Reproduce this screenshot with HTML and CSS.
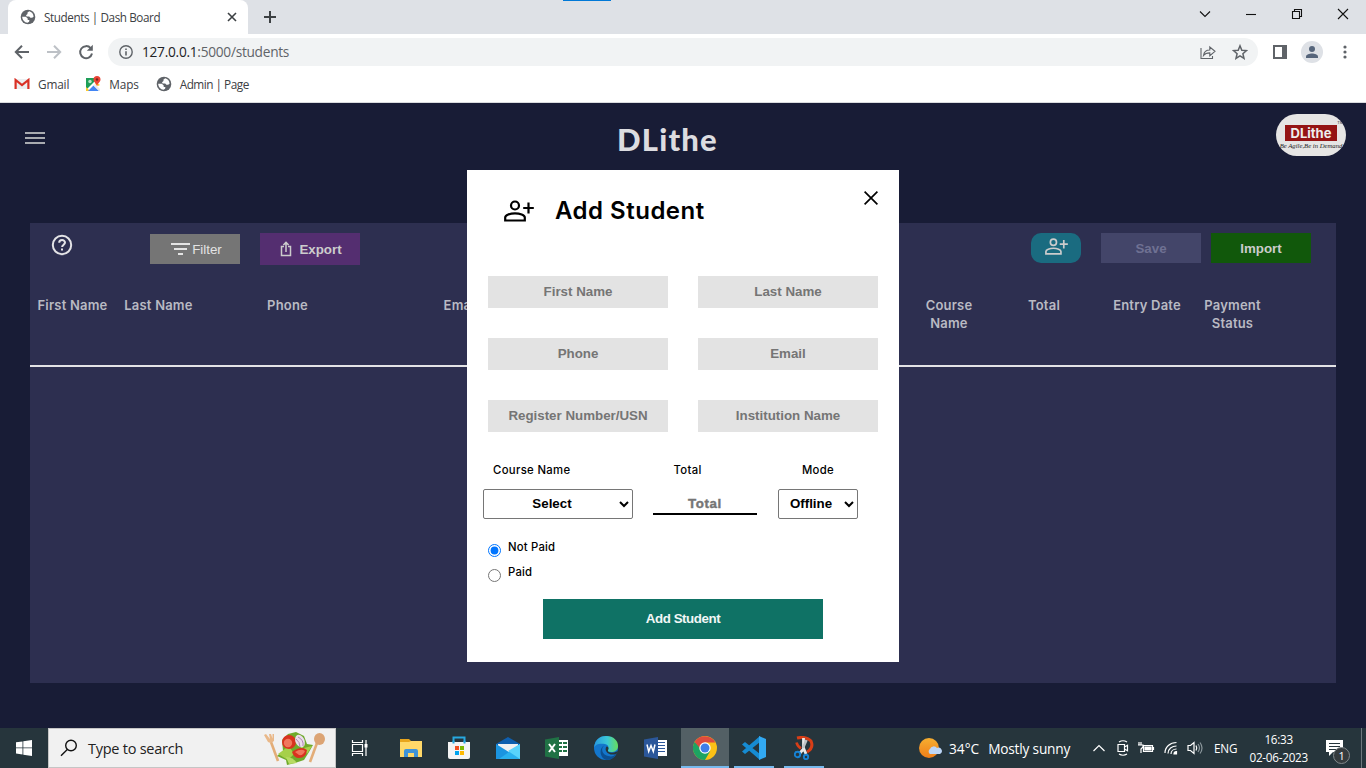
FILE: index.html
```html
<!DOCTYPE html>
<html lang="en">
<head>
<meta charset="utf-8">
<title>Students | Dash Board</title>
<link rel="stylesheet" href="styles.css">
</head>
<body>
<svg class="defs" width="0" height="0">
  <symbol id="globe" viewBox="0 0 16 16"><circle cx="8" cy="8" r="7.300" fill="#5f6368"/><path d="M9.300 2.200 7.500 3.600v1.500L6 6.200l.6 1.300h2.600l1.200 1.200h1.700l1.500-.9C13.500 4.800 11.600 2.700 9.300 2.200z" fill="#fff"/><path d="M2.200 7.800h3.600l1.900 1.800v1.500h1.700l-.3 1.700-1.600.9C4.500 13.600 2.300 11 2.200 7.800z" fill="#fff"/></symbol>
  <symbol id="addperson" viewBox="0 0 30 22"><g fill="none" stroke="currentColor" stroke-width="2.200"><circle cx="11" cy="5.500" r="4"/><path d="M1.200 20.500v-3c0-2.400 5-4.200 9.800-4.200s9.800 1.800 9.800 4.200v3zM24.500 2.500v11M19.200 8h10.600"/></g></symbol>
</svg>

<header class="browser">
  <div class="tabstrip">
    <span class="loadbar"></span>
    <div class="tab"><svg width="16" height="16"><use href="#globe"/></svg><span class="tab-title">Students | Dash Board</span><svg width="10" height="10" viewBox="0 0 10 10" stroke="#3c4043" stroke-width="1.600"><path d="M1 1l8 8M9 1L1 9"/></svg></div>
    <svg class="newtab" width="12" height="12" viewBox="0 0 12 12" stroke="#3c4043" stroke-width="2"><path d="M6 0v12M0 6h12"/></svg>
    <div class="wincontrols">
      <svg width="12" height="12" viewBox="0 0 12 12"><path d="M1 3.500l5 5 5-5"/></svg>
      <svg width="12" height="12" viewBox="0 0 12 12"><path d="M1 6.500h10"/></svg>
      <svg width="12" height="12" viewBox="0 0 12 12"><path d="M1.500 3.500h7v7h-7zM3.500 3.500v-2h7v7h-2"/></svg>
      <svg width="12" height="12" viewBox="0 0 12 12"><path d="M1 1l10 10M11 1L1 11"/></svg>
    </div>
  </div>
  <div class="toolbar">
    <div class="nav">
      <svg width="16" height="16" viewBox="0 0 16 16" stroke="#5f6368"><path d="M15 8H2M8 1.800L1.800 8 8 14.200"/></svg>
      <svg width="16" height="16" viewBox="0 0 16 16" stroke="#bdc1c6"><path d="M1 8h13M8 1.800L14.200 8 8 14.200"/></svg>
      <svg width="16" height="16" viewBox="0 0 16 16" stroke="#5f6368"><path d="M14 9.500A6 6 0 1 1 12.700 4.200"/><path d="M14.800.8v6H8.800z" fill="#5f6368" stroke="none"/></svg>
    </div>
    <div class="omnibox">
      <svg width="14" height="14" viewBox="0 0 14 14" fill="none" stroke="#5f6368" stroke-width="1.400"><circle cx="7" cy="7" r="6.200"/><path d="M7 6.200v4.300M7 3.400v1.500" stroke-width="1.600"/></svg>
      <span class="url"><b>127.0.0.1</b>:5000/students</span>
      <svg width="16" height="16" viewBox="0 0 16 16" fill="none" stroke="#5f6368" stroke-width="1.100"><path d="M1 4v10.500h11.500V12M3.500 11.500C4 8 6 6 9.800 6V3L15 7.300l-5.200 4.400V8.900C7 8.900 5 9.600 3.500 11.500z"/></svg>
      <svg width="16" height="16" viewBox="0 0 16 16" fill="none" stroke="#5f6368" stroke-width="1.500"><path d="M8 1.800l1.800 4.400 4.700.4-3.600 3.100 1.100 4.600L8 11.800l-4 2.500 1.100-4.600L1.500 6.600l4.700-.4z"/></svg>
    </div>
    <svg class="panel-icon" width="14" height="14" viewBox="0 0 14 14"><path fill="none" stroke="#5f6368" stroke-width="2" d="M1 1h12v12H1z"/><path fill="#5f6368" d="M9 1h4v12H9z"/></svg>
    <svg class="avatar" width="22" height="22" viewBox="0 0 22 22"><circle cx="11" cy="11" r="11" fill="#dee1e6"/><circle cx="11" cy="8" r="3" fill="#56657b"/><path d="M5 17v-1.500c0-2 3.500-3 6-3s6 1 6 3V17z" fill="#56657b"/></svg>
    <svg width="4" height="14" viewBox="0 0 4 14" fill="#5f6368"><circle cx="2" cy="2" r="1.600"/><circle cx="2" cy="7" r="1.600"/><circle cx="2" cy="12" r="1.600"/></svg>
  </div>
  <nav class="bookmarks">
    <span class="bm"><svg width="16" height="12" viewBox="0 0 16 12"><path fill="#eceff1" d="M1 1h14v10H1z"/><path fill="none" stroke="#d93025" stroke-width="2.200" d="M1.600 11V2l6.400 5 6.400-5v9"/></svg><span class="t-gmail">Gmail</span></span>
    <span class="bm maps"><svg width="15" height="16" viewBox="0 0 15 16"><path fill="#1e9e58" d="M0 2h12L0 14z"/><path fill="#ffca28" d="M0 11l4 4H0zM10 6l4 3-2 1-3-2z"/><path fill="#4285f4" d="M2 15l5.500-5.500L13 15z"/><path fill="#e8eaed" d="M9 8l5 5v2h-1L7.500 9.500z"/><circle cx="4" cy="5.500" r="1.700" fill="#b9e3c8"/><path fill="#ea4335" d="M11 0a3.500 3.500 0 0 1 3.500 3.500C14.500 6 11.500 7 11 10.500 10.500 7 7.500 6 7.500 3.500A3.500 3.500 0 0 1 11 0z"/><circle cx="11" cy="3.500" r="1.200" fill="#7b241c"/></svg><span class="t-maps">Maps</span></span>
    <span class="bm admin"><svg width="16" height="16"><use href="#globe"/></svg><span class="t-admin">Admin | Page</span></span>
  </nav>
</header>

<main class="page">
  <div class="pagehead">
    <div class="burger"><i></i><i></i><i></i></div>
    <h1>DLithe</h1>
    <div class="logo"><span class="logo-name">DLithe</span><span class="logo-tag">Be Agile,Be in Demand</span><small>TM</small></div>
  </div>
  <section class="board">
    <div class="actions">
      <svg class="help" width="22" height="22" viewBox="0 0 22 22" fill="none" stroke="#e3e3e6" stroke-width="2"><circle cx="11" cy="11" r="9.200"/><path d="M8.200 8.800c0-3.700 5.800-3.500 5.800-.2 0 2-2.900 2.200-2.900 4.500"/><path d="M11 14.500v2.100"/></svg>
      <button class="filter"><svg width="19" height="12" viewBox="0 0 19 12" fill="#e3e3e3"><path d="M0 0h19v2H0zM3 5h13v2H3zM7 10h5v2H7z"/></svg>Filter</button>
      <button class="export"><svg width="12" height="16" viewBox="0 0 12 16" fill="none" stroke="#ccc" stroke-width="1.500"><path d="M4 5.500H1.500v9h9v-9H8M6 11V1.500M3.400 4L6 1.400 8.600 4"/></svg>Export</button>
      <button class="adder"><svg width="23" height="17"><use href="#addperson"/></svg></button>
      <button class="save">Save</button>
      <button class="import">Import</button>
    </div>
    <div class="columns">
      <span>First Name</span><span>Last Name</span><span>Phone</span><span>Email</span><span></span><span></span><span>Course<br>Name</span><span>Total</span><span>Entry Date</span><span>Payment<br>Status</span>
    </div>
  </section>

  <form class="modal">
    <svg class="close" width="14" height="14" viewBox="0 0 14 14" stroke="#000" stroke-width="1.700"><path d="M.6.600l12.800 12.800M13.400.600L.6 13.400"/></svg>
    <div class="modal-head"><svg width="30" height="22"><use href="#addperson"/></svg><h2>Add Student</h2></div>
    <div class="fields">
      <input placeholder="First Name"><input placeholder="Last Name">
      <input placeholder="Phone"><input placeholder="Email">
      <input placeholder="Register Number/USN"><input placeholder="Institution Name">
    </div>
    <div class="course">
      <label class="l1">Course Name</label><label class="l2">Total</label><label class="l3">Mode</label>
      <select class="s1"><option>Select</option></select>
      <input class="total" placeholder="Total">
      <select class="s2"><option>Offline</option></select>
    </div>
    <div class="radios">
      <label><input type="radio" name="pay" checked><span>Not Paid</span></label>
      <label><input type="radio" name="pay"><span>Paid</span></label>
    </div>
    <button type="button" class="submit">Add Student</button>
  </form>
</main>

<footer class="taskbar">
  <div class="start"><svg width="16" height="16" viewBox="0 0 16 16" fill="#fff"><path d="M0 2.300l6.500-.9v6.100H0zM7.300 1.300L16 0v7.500H7.300zM0 8.300h6.500v6.200L0 13.600zM7.300 8.300H16V16l-8.700-1.300z"/></svg></div>
  <div class="search">
    <svg width="18" height="18" viewBox="0 0 18 18" fill="none" stroke="#111" stroke-width="1.400"><circle cx="11" cy="6.500" r="5.300"/><path d="M7.300 10.500L1 16.700"/></svg>
    <span class="t-search">Type to search</span>
    <svg width="62" height="34" viewBox="0 0 62 34">
      <path d="M7 11l7 19" stroke="#e3ad78" stroke-width="2.600"/><path d="M0 4l4 7q3 2 6-1V3L8.500 3v4.500L7 3 5 3l1 5-4-5z" fill="#e9b889"/>
      <path d="M53 12l-7 19" stroke="#e3ad78" stroke-width="2.600"/><ellipse cx="55.500" cy="8" rx="5.500" ry="6" fill="#dca474"/>
      <path d="M18 9l6-6 8-2 8 4 3 8 6 1-4 7-5 8-9 3-8 2-1-5-9-4 6-5z" fill="#6faa2b"/><path d="M14 23l11-8 5 8-6 6zM35 5l6 9-4 5zM40 17l8-2-5 8z" fill="#a6d04a"/>
      <circle cx="25" cy="11" r="7" fill="#d9321f"/><circle cx="24" cy="12" r="4.200" fill="#f0775c"/><ellipse cx="36" cy="10" rx="4.500" ry="6.500" fill="#e9dcea" transform="rotate(-25 36 10)"/><path d="M34 6q6 3 5 9M32 8q4 3 4 8" fill="none" stroke="#b285b5"/>
      <path d="M28 21q9-7 15-2-1 8-8 8-5 0-7-6z" fill="#d9321f"/><path d="M31 21q6-4 10-1-2 5-6 4z" fill="#f0775c"/><path d="M22 26q7 0 11 6l-8 1z" fill="#b7db62"/>
    </svg>
  </div>
  <div class="apps">
    <div><svg width="18" height="18" viewBox="0 0 18 18" fill="none" stroke="#fff" stroke-width="1.200"><path d="M1.500 1v2.500h10V1M1.500 5.500h10v7h-10zM1.500 17v-2.500h10V17M15 1v16"/><path d="M13.500 5h3v3.500h-3z" fill="#fff" stroke="none"/></svg></div>
    <div class="folder"><svg width="22" height="20" viewBox="0 0 22 20"><path d="M0 1h9l2 2h11v16H0z" fill="#e8a51d"/><path d="M0 4h9l2-1h11v16H0z" fill="#ffd869"/><path d="M4 19v-6q0-2 2-2h10q2 0 2 2v6h-4v-4H8v4z" fill="#3f93d8"/></svg></div>
    <div><svg width="24" height="24" viewBox="0 0 24 24"><path d="M6.500 7V1.500h11V7" fill="none" stroke="#27a8df" stroke-width="2"/><path d="M1 6h22v15q0 2-2 2H3q-2 0-2-2z" fill="#f4f4f4"/><path d="M6.500 5v2.500M17.500 5v2.500" stroke="#27a8df" stroke-width="2"/><path d="M8 10h4v4H8z" fill="#f25022"/><path d="M13 10h4v4h-4z" fill="#7fba00"/><path d="M8 15h4v4H8z" fill="#00a4ef"/><path d="M13 15h4v4h-4z" fill="#ffb900"/></svg></div>
    <div><svg width="24" height="22" viewBox="0 0 24 22"><path d="M0 7l12-7 12 7v3H0z" fill="#0f5fae"/><path d="M2 7h20v7l-10 3L2 14z" fill="#f1f1f1"/><path d="M0 7l24 15H0z" fill="#1b94e0"/><path d="M24 7v15H3z" fill="#2ab0ee"/><path d="M24 7v15l-12-8z" fill="#59d3fb"/></svg></div>
    <div><svg width="24" height="22" viewBox="0 0 24 22"><path d="M12 3h11v16H12z" fill="#fff"/><path d="M14 5h3v2h-3zM14 9h3v2h-3zM14 13h3v2h-3zM18 5h4v2h-4zM18 9h4v2h-4zM18 13h4v2h-4z" fill="#207245"/><path d="M0 2.500L14 0v22L0 19.500z" fill="#207245"/><path d="M4 7l6 8M10 7l-6 8" stroke="#fff" stroke-width="2"/></svg></div>
    <div><svg width="24" height="24" viewBox="0 0 24 24"><defs><linearGradient id="edge"><stop stop-color="#2898df"/><stop offset=".55" stop-color="#3bc7d6"/><stop offset="1" stop-color="#67df5b"/></linearGradient></defs><circle cx="12" cy="12" r="12" fill="#1376cc"/><path d="M0 12C1 3 6 0 12 0c8 0 12 5 12 10 0 4-3 6-7 6-3 0-4-1-3-2 1-2 1-5-3-6C6 7 1 8 0 12z" fill="url(#edge)"/><path d="M11 9c-5 3-3 10 3 11 4 1 6 0 8-2-1 3-5 6-9 6-7-1-9-12-2-15z" fill="#0c4f91"/><path d="M12.500 10.500c2 0 2.500 2 1.500 3.500-.8 2 2 3 6 2.500l4-1.500-1.500 3c-8 2.500-13-3.500-10-7.500z" fill="#27343a"/></svg></div>
    <div><svg width="23" height="22" viewBox="0 0 23 22"><path d="M12 3h11v16H12z" fill="#fff"/><path d="M14 5.500h7M14 8.500h7M14 11.500h7M14 14.500h7" stroke="#2b579a" stroke-width="1.200"/><path d="M0 2.500L14 0v22L0 19.500z" fill="#2b579a"/><path d="M3 7.500l1.700 7L7 8.500l2.300 6 1.700-7" fill="none" stroke="#fff" stroke-width="1.500"/></svg></div>
    <div class="on current"><svg width="24" height="24" viewBox="0 0 24 24"><circle cx="12" cy="12" r="12" fill="#fbc116"/><path d="M12 12L1.600 6A12 12 0 0 0 12 24l5.200-9z" fill="#1da462"/><path d="M12 12H6.800L1.600 6A12 12 0 0 1 22.400 6.500H12z" fill="#dd4b3e"/><circle cx="12" cy="12" r="5.700" fill="#fff"/><circle cx="12" cy="12" r="4.500" fill="#3f7ee8"/></svg></div>
    <div class="on"><svg width="24" height="24" viewBox="0 0 24 24"><path d="M18 0v6L3 18l-3-2.500zM0 8.500L3 6l15 12v6z" fill="#168bd2"/><path d="M17 0l7 3v18l-7 3z" fill="#32a9f2"/></svg></div>
    <div class="on"><svg width="20" height="24" viewBox="0 0 20 24"><path d="M3 2q9-2 14 3 3 7-4 11" fill="none" stroke="#d83e17" stroke-width="3"/><path d="M2.500 6.500q1 4 4.500 6" fill="none" stroke="#d83e17" stroke-width="2.600"/><path d="M9.500 2v11L6 17M9.500 12l2.500 6" fill="none" stroke="#e7e7e7" stroke-width="2.800"/><path d="M12.500 4L9 12" stroke="#bfc3c6" stroke-width="2.500"/><circle cx="3.500" cy="18.500" r="2.700" fill="none" stroke="#1682d5" stroke-width="1.900"/><circle cx="12" cy="21" r="2.200" fill="none" stroke="#1682d5" stroke-width="1.900"/></svg></div>
  </div>
  <div class="weather"><svg width="23" height="20" viewBox="0 0 23 20"><defs><linearGradient id="sun" x2="0" y2="1"><stop stop-color="#f6ae30"/><stop offset="1" stop-color="#ef7e19"/></linearGradient></defs><circle cx="10" cy="10" r="10" fill="url(#sun)"/><path d="M11 16a3 3 0 0 1 0-5 4 4 0 0 1 7-1 3.200 3.200 0 0 1 3 6z" fill="#bcd5f6"/></svg><span class="t-temp">34°C</span><span class="t-sun">Mostly sunny</span></div>
  <div class="tray">
    <svg width="12" height="8" viewBox="0 0 12 8"><path d="M.5 7L6 1.500 11.500 7"/></svg>
    <svg width="12" height="16" viewBox="0 0 12 16"><path d="M1 4.500h6.500v7H1zM7.500 7l3-1.700v5.400l-3-1.700M2 2q4-2.500 8 0M2 14q4 2.500 8 0"/></svg>
    <svg width="17" height="12" viewBox="0 0 17 12"><path d="M5.500 3.500h9v6h-9zM15.500 5v3M3 0v3M0 3h5v2L3 7v4M1 0v3"/><path d="M7 5h6v3H7z" fill="#fff"/></svg>
    <svg width="14" height="14" viewBox="0 0 14 14"><path d="M1 12C1 6 6 1.500 12.500 1.500M4 12.500C4 8 8 5 12.500 5M7 13c0-3 2.500-5 5.500-5"/><path d="M10 13c0-1.500 1-2.500 2.500-2.500V13z" fill="#fff"/></svg>
    <svg width="16" height="14" viewBox="0 0 16 14"><path d="M1 4.500h2.500L7 1.500v11L3.500 9.500H1z"/><path d="M9 4.500q1.500 2.500 0 5"/><path d="M11 3q3 4 0 8M13 1.500q4 5.500 0 11" stroke="#8b969b"/></svg>
    <span class="t-eng">ENG</span>
    <div class="clock"><span>16:33</span><span>02-06-2023</span></div>
    <div class="notify"><svg width="17" height="17" viewBox="0 0 17 17"><path d="M0 0h17v12H7l-4 4v-4H0z" fill="#fff" stroke="none"/><path d="M3 3.500h11M3 6.500h11M3 9.500h7" stroke="#26353c"/></svg><span class="count">1</span></div>
  </div>
  <span class="peek"></span>
</footer>
</body>
</html>
```
FILE: styles.css
```css
* { box-sizing: border-box; }
body { margin: 0; width: 1366px; height: 768px; overflow: hidden; display: flex; flex-direction: column; font-family: "Open Sans", "Noto Sans", sans-serif; background: #181c36; }
svg { display: block; flex: none; }
.defs { position: absolute; }
span, label, h1, h2 { white-space: nowrap; }
button, input, select { font: bold 13.333px "Liberation Sans", Arial, sans-serif; margin: 0; }

/* browser chrome */
.browser { height: 103px; flex: none; background: #fff; border-bottom: 1px solid #d9dbde; }
.tabstrip { height: 34px; background: #dee1e6; display: flex; align-items: center; padding-left: 8px; position: relative; }
.loadbar { position: absolute; left: 563px; top: 0; width: 48px; height: 1px; background: #0078d7; }
.tab { width: 240px; height: 34px; background: #fff; border-radius: 8px 8px 0 0; display: flex; align-items: center; padding: 0 11px 0 12px; font-size: 11.700px; color: #3c4043; }
.tab-title { flex: 1; margin: -1px 0 0 8px; letter-spacing: -.4px; }
.newtab { margin-left: 16px; }
.wincontrols { margin-left: auto; display: flex; gap: 34px; padding: 0 17px 6px 0; }
.wincontrols svg { fill: none; stroke: #111; stroke-width: 1.1; }
.toolbar { height: 36px; display: flex; align-items: center; padding: 0 20px 0 14px; }
.nav { display: flex; gap: 16px; width: 94px; flex: none; fill: none; stroke-width: 2; }
.omnibox { width: 1150px; flex: none; height: 28px; border-radius: 14px; background: #f1f3f4; display: flex; align-items: center; padding: 0 10px 0 11px; gap: 16px; }
.url { flex: 1; margin: -1px 0 0 -7px; font-size: 13.700px; letter-spacing: -.27px; color: #5f6368; }
.url b { font-weight: 400; color: #202124; }
.panel-icon { margin-left: 15px; }
.avatar { margin: 0 20px 0 14px; }
.bookmarks { height: 32px; display: flex; align-items: center; padding: 0 0 4px 14px; font-size: 11.800px; color: #3c4043; }
.bm { display: flex; align-items: center; gap: 8px; }
.bm span { margin-top: -1px; letter-spacing: -.15px; }
.maps { margin-left: 17px; }
.admin { margin-left: 17px; }
.bm .t-admin { letter-spacing: -.5px; }

/* page */
.page { height: 625px; position: relative; padding: 0 30px; }
.pagehead { height: 120px; display: flex; align-items: flex-start; margin: 0 -10px 0 -5px; }
.burger { width: 61px; padding-top: 29px; display: grid; gap: 3px; }
.burger i { width: 20px; height: 2px; background: #a9abb0; }
h1 { margin: 17px 0 0 531px; font: 900 31px/38px Lato, sans-serif; letter-spacing: 1.200px; color: #dcdce0; }
.logo { width: 70px; height: 42px; margin: 11px 0 0 auto; border-radius: 21px; background: #e6e5e4; display: flex; flex-direction: column; align-items: center; padding-top: 11px; position: relative; overflow: hidden; }
.logo-name { width: 52px; height: 16px; background: #951414; color: #eee; font: 700 13px/16px Inter, sans-serif; text-align: center; }
.logo-tag { font: italic 6.700px/9px "Liberation Serif", serif; color: #222; }
.logo small { position: absolute; right: 3px; top: 6px; font: 4px/6px sans-serif; color: #333; }
.board { height: 460px; background: #2d2f50; }
.actions { height: 66px; display: flex; align-items: flex-start; padding: 10px 25px 0 21px; }
.actions button { border: 0; padding: 0; display: flex; align-items: center; justify-content: center; color: #ccc; width: 100px; height: 30px; }
.help { margin-top: 1px; }
.actions .filter { width: 90px; margin: 1px 0 0 77px; background: #757575; color: #e3e3e3; font-weight: 400; gap: 2px; padding-left: 3px; }
.actions .export { height: 32px; margin-left: 20px; background: #542e70; gap: 7px; padding-left: 2px; }
.actions .adder { width: 50px; margin-left: auto; border-radius: 10px; background: #1a6b80; padding-bottom: 4px; }
.adder symbol, .adder svg { stroke-width: 2.800; }
.actions .save { margin-left: 20px; background: #434569; color: #6f7193; }
.actions .import { margin-left: 10px; background: #11580b; }
.columns { height: 78px; border-bottom: 2px solid #e3e3e6; display: grid; grid-template-columns: 85px 87px 171px 176px 178px 178px 88px 102px 104px 67px; justify-items: center; padding-top: 7px; font: 600 13px/18px Inter, sans-serif; letter-spacing: .2px; color: #b9bac3; text-align: center; }

/* add student dialog */
.modal { position: absolute; left: 467px; top: 67px; width: 432px; height: 492px; background: #fff; padding: 0 21px; }
.close { position: absolute; right: 21px; top: 21px; }
.modal-head { height: 106px; display: flex; align-items: flex-start; padding: 30px 0 0 16px; gap: 21px; }
h2 { margin: -7px 0 0; font: 600 24px/36px Inter, sans-serif; letter-spacing: .5px; color: #000; }
.fields { display: grid; grid-template-columns: 180px 180px; gap: 30px; }
.fields input { width: 180px; height: 32px; border: 0; background: #e3e3e3; text-align: center; padding: 0 2px 2px; }
input::placeholder { color: #757575; }
.course { display: grid; grid-template-columns: 150px 104px 80px; column-gap: 20.500px; row-gap: 10px; margin: 29px 0 0 -5px; font: 500 11.300px/18px Inter, sans-serif; letter-spacing: .35px; }
.course .l1 { padding-left: 10px; }
.course .l2 { padding-left: 20px; }
.course .l3 { text-align: center; }
select { height: 30px; background: #fff; border: 1px solid #767676; border-radius: 2px; text-align: center; color: #000; padding-bottom: 2px; }
.s1 { width: 150px; }
.s2 { width: 80px; padding-left: 0; padding-right: 2px; }
.total { width: 104px; height: 26px; margin-left: -.5px; border: 0; border-bottom: 2px solid #000; text-align: center; letter-spacing: .6px; padding: 4px 0 0; }
.total::placeholder { -webkit-text-stroke: .4px #757575; }
.radios { display: grid; row-gap: 7px; margin-top: 19px; font: 500 11.300px/18px Inter, sans-serif; letter-spacing: .2px; }
.radios label { height: 18px; display: flex; }
.radios input { width: 13px; height: 13px; margin: 6px 7px 0 0; }
.submit { display: block; width: 280px; height: 40px; margin: 18px 0 0 55px; padding: 0 0 2px; border: 0; background: #0f7265; color: #f2f7f6; letter-spacing: -.45px; }

/* taskbar */
.taskbar { height: 40px; background: #26353c; display: flex; color: #fff; position: relative; }
.start { width: 48px; display: grid; place-items: center; }
.search { width: 288px; background: #f1f1f1; border: 1px solid #c5c5c5; display: flex; align-items: center; padding: 0 9px 0 11px; font-size: 14.500px; color: #222; }
.t-search { flex: 1; margin-left: 10px; letter-spacing: -.25px; }
.apps { display: flex; gap: 1.300px; }
.apps > div { width: 48px; height: 40px; display: grid; place-items: center; }
.apps .folder { padding-left: 4px; }
.apps .on { border-bottom: 2px solid #76b9ed; width: 40px; margin: 0 4px; padding-top: 2px; }
.apps .current { width: 48px; margin: 0; background: #536065; }
.weather { width: 168px; margin-left: auto; display: flex; align-items: center; font-size: 13.700px; }
.t-temp { margin-left: 7px; }
.t-sun { margin-left: 9px; letter-spacing: -.2px; }
.tray { width: 279px; padding-left: 6px; display: flex; align-items: center; gap: 12px; font-size: 11.700px; }
.tray svg { fill: none; stroke: #fff; stroke-width: 1.200; }
.tray svg:nth-of-type(n+3) { margin-left: -3px; }
.t-eng { letter-spacing: -.2px; margin-left: -1px; }
.clock { width: 59px; display: grid; justify-items: center; line-height: 18px; letter-spacing: -.25px; }
.notify { position: relative; margin-left: 6px; }
.count { position: absolute; left: 7px; top: 7px; width: 17px; height: 17px; border: 1px solid #82898c; border-radius: 50%; background: #353b3e; font-size: 11px; line-height: 15px; text-align: center; }
.peek { position: absolute; right: 4px; top: 0; width: 1px; height: 40px; background: #6d787d; }
```
